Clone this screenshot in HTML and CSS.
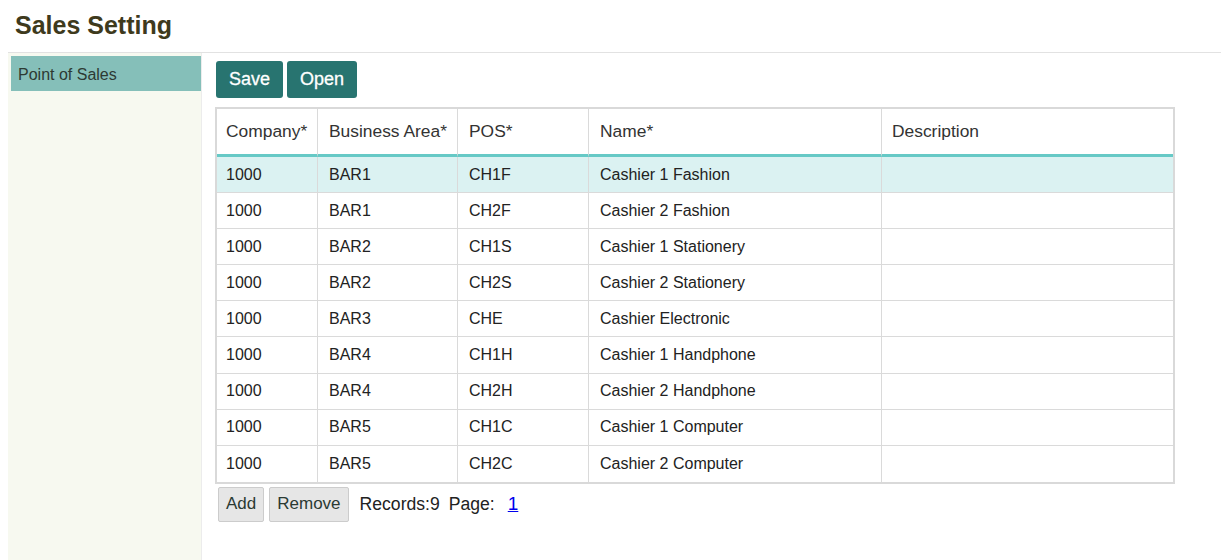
FILE: index.html
```html
<!DOCTYPE html>
<html>
<head>
<meta charset="utf-8">
<link rel="stylesheet" href="styles.css">
</head>
<body>
<h1 class="title">Sales Setting</h1>
<div class="layout">
  <aside class="sidebar">
    <div class="side-item">Point of Sales</div>
  </aside>
  <main class="content">
    <div class="toolbar">
      <button class="btn-primary">Save</button>
      <button class="btn-primary">Open</button>
    </div>
    <table class="grid">
      <colgroup>
        <col class="c1"><col class="c2"><col class="c3"><col class="c4"><col class="c5">
      </colgroup>
      <thead>
        <tr><th>Company*</th><th>Business Area*</th><th>POS*</th><th>Name*</th><th>Description</th></tr>
      </thead>
      <tbody>
        <tr class="selected"><td>1000</td><td>BAR1</td><td>CH1F</td><td>Cashier 1 Fashion</td><td></td></tr>
        <tr><td>1000</td><td>BAR1</td><td>CH2F</td><td>Cashier 2 Fashion</td><td></td></tr>
        <tr><td>1000</td><td>BAR2</td><td>CH1S</td><td>Cashier 1 Stationery</td><td></td></tr>
        <tr><td>1000</td><td>BAR2</td><td>CH2S</td><td>Cashier 2 Stationery</td><td></td></tr>
        <tr><td>1000</td><td>BAR3</td><td>CHE</td><td>Cashier Electronic</td><td></td></tr>
        <tr><td>1000</td><td>BAR4</td><td>CH1H</td><td>Cashier 1 Handphone</td><td></td></tr>
        <tr><td>1000</td><td>BAR4</td><td>CH2H</td><td>Cashier 2 Handphone</td><td></td></tr>
        <tr><td>1000</td><td>BAR5</td><td>CH1C</td><td>Cashier 1 Computer</td><td></td></tr>
        <tr><td>1000</td><td>BAR5</td><td>CH2C</td><td>Cashier 2 Computer</td><td></td></tr>
      </tbody>
    </table>
    <div class="footer">
      <button class="btn-grey">Add</button>
      <button class="btn-grey">Remove</button>
      <span class="records">Records:9</span>
      <span class="page">Page:</span>
      <a class="page-link" href="#">1</a>
    </div>
  </main>
</div>
</body>
</html>
```

FILE: styles.css
```css
html, body {
  height: 100%;
}
body {
  margin: 0 0 0 8px;
  padding-top: 8px;
  box-sizing: border-box;
  font-family: "Liberation Sans", Arial, sans-serif;
  color: #222;
  display: flex;
  flex-direction: column;
}
.title {
  margin: 0;
  height: 44px;
  padding-left: 7px;
  font-size: 25px;
  font-weight: bold;
  line-height: 34px;
  color: #3e3a1d;
}
.layout {
  flex: 1;
  display: flex;
  border-top: 1px solid #e2e2e2;
}
.sidebar {
  width: 194px;
  padding: 3px 0 0 3px;
  box-sizing: border-box;
  background: #f7f9f0;
  border-right: 1px solid #ececec;
}
.side-item {
  height: 35px;
  line-height: 37px;
  padding-left: 7px;
  font-size: 16px;
  color: #2d3a33;
  background: #85bfb9;
}
.content {
  flex: 1;
  padding: 8px 0 0 13px;
}
.toolbar {
  display: flex;
  gap: 4px;
  margin-left: 1px;
  margin-bottom: 9px;
}
.btn-primary {
  height: 37px;
  padding: 0 13px;
  border: none;
  border-radius: 3px;
  background: #287470;
  color: #fff;
  font-family: "Liberation Sans", Arial, sans-serif;
  font-size: 18px;
  font-weight: normal;
  -webkit-text-stroke: 0.3px #fff;
}
.grid {
  width: 960px;
  border-collapse: separate;
  border-spacing: 0;
  border: 2px solid #d9d9d9;
  table-layout: fixed;
}
.c1 { width: 101px; }
.c2 { width: 140px; }
.c3 { width: 131px; }
.c4 { width: 293px; }
.c5 { width: 291px; }
.grid th, .grid td {
  padding: 0 0 0 11px;
  text-align: left;
  border-right: 1px solid #dadada;
  white-space: nowrap;
}
.grid th:first-child, .grid td:first-child {
  padding-left: 9px;
}
.grid th:last-child, .grid td:last-child {
  border-right: none;
  padding-left: 10px;
}
.grid th {
  height: 48px;
  font-size: 17.4px;
  font-weight: normal;
  color: #333;
  border-bottom: 3px solid #66c9c6;
  box-sizing: border-box;
}
.grid td {
  height: 36.1px;
  box-sizing: border-box;
  font-size: 16px;
  border-bottom: 1px solid #dadada;
}
.grid tbody tr:last-child td {
  border-bottom: none;
}
.grid tr.selected td {
  background: #dbf2f2;
}
.footer {
  display: flex;
  align-items: center;
  margin: 3px 0 0 3px;
  font-size: 17.6px;
  color: #222;
}
.btn-grey {
  height: 35px;
  padding: 0 7px;
  margin-right: 5px;
  background: #e6e6e6;
  border: 1px solid #cccccc;
  border-radius: 2px;
  font-family: "Liberation Sans", Arial, sans-serif;
  font-size: 17px;
  color: #2b3a33;
}
.records {
  margin-left: 6px;
}
.page {
  margin-left: 9px;
}
.page-link {
  margin-left: 13px;
  font-size: 19px;
  color: #0000ee;
}
```
